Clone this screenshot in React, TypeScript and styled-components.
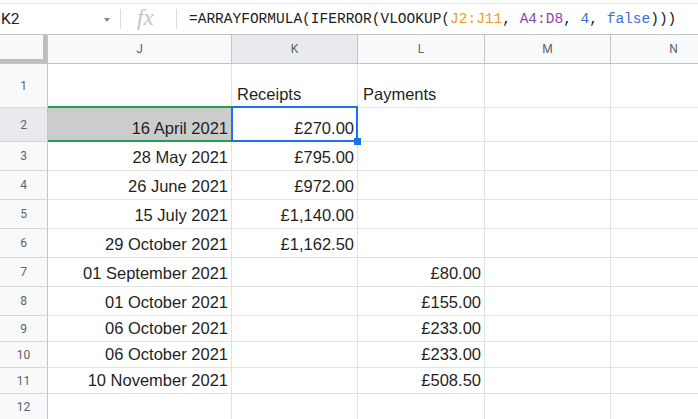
import styled, { createGlobalStyle } from "styled-components";

type Row = { n: number; h: number; j?: string; k?: string; l?: string; head?: boolean };

const columns = [
  { id: "J", w: 184 },
  { id: "K", w: 126 },
  { id: "L", w: 127 },
  { id: "M", w: 126 },
  { id: "N", w: 126 },
];

const rows: Row[] = [
  { n: 1, h: 44, k: "Receipts", l: "Payments", head: true },
  { n: 2, h: 34, j: "16 April 2021", k: "£270.00" },
  { n: 3, h: 29, j: "28 May 2021", k: "£795.00" },
  { n: 4, h: 29, j: "26 June 2021", k: "£972.00" },
  { n: 5, h: 29, j: "15 July 2021", k: "£1,140.00" },
  { n: 6, h: 29, j: "29 October 2021", k: "£1,162.50" },
  { n: 7, h: 29, j: "01 September 2021", l: "£80.00" },
  { n: 8, h: 29, j: "01 October 2021", l: "£155.00" },
  { n: 9, h: 26, j: "06 October 2021", l: "£233.00" },
  { n: 10, h: 26, j: "06 October 2021", l: "£233.00" },
  { n: 11, h: 26, j: "10 November 2021", l: "£508.50" },
  { n: 12, h: 26 },
];

function App() {
  return (
    <>
      <GlobalStyle />
      <Page>
        <FormulaBar>
          <NameBox>K2</NameBox>
          <Caret />
          <Divider />
          <Fx>fx</Fx>
          <Divider />
          <Formula>
            =ARRAYFORMULA(IFERROR(VLOOKUP(<Ref $color="#f29b1c">J2:J11</Ref>,{" "}
            <Ref $color="#8e44ad">A4:D8</Ref>, <Ref $color="#3a6fd8">4</Ref>,{" "}
            <Ref $color="#3a6fd8">false</Ref>)))
          </Formula>
        </FormulaBar>
        <Grid>
          <HeaderRow>
            <Corner>
              <Freeze />
            </Corner>
            {columns.map((c) => (
              <ColHeader key={c.id} $w={c.w} $active={c.id === "K"}>
                {c.id}
              </ColHeader>
            ))}
          </HeaderRow>
          {rows.map((r) => (
            <GridRow key={r.n} $h={r.h}>
              <RowHeader $active={r.n === 2}>{r.n}</RowHeader>
              <Cell $w={184} $fill={r.n === 2}>
                {r.n === 2 && <RangeEdge />}
                {r.j}
              </Cell>
              <Cell $w={126} $left={r.head}>
                {r.k}
                {r.n === 2 && (
                  <Selection>
                    <Handle />
                  </Selection>
                )}
              </Cell>
              <Cell $w={127} $left={r.head}>
                {r.l}
              </Cell>
              <Cell $w={126} />
              <Cell $w={126} />
            </GridRow>
          ))}
        </Grid>
      </Page>
    </>
  );
}

export default App;

const GlobalStyle = createGlobalStyle`
  html, body {
    margin: 0;
    background: #fff;
    overflow: hidden;
  }
`;

const Page = styled.div`
  width: 698px;
  height: 419px;
  overflow: hidden;
  font-family: "Liberation Sans", Arial, sans-serif;
`;

const FormulaBar = styled.div`
  height: 30px;
  margin-top: 3px;
  border-top: 1px solid #e3e3e3;
  border-bottom: 1px solid #c4c4c4;
  display: flex;
  align-items: center;
  box-sizing: content-box;
`;

const NameBox = styled.div`
  width: 100px;
  padding-left: 1px;
  font-family: Roboto, sans-serif;
  font-size: 15.5px;
  color: #202124;
`;

const Caret = styled.div`
  width: 0;
  height: 0;
  margin: 1px 10px 0 3px;
  border-left: 3.5px solid transparent;
  border-right: 3.5px solid transparent;
  border-top: 4px solid #888;
`;

const Divider = styled.div`
  width: 1px;
  height: 20px;
  background: #dadce0;
`;

const Fx = styled.div`
  width: 55px;
  padding-left: 16px;
  box-sizing: border-box;
  font-family: "Liberation Serif", serif;
  font-style: italic;
  font-size: 23px;
  color: #c4c4c4;
  margin-top: -2px;
`;

const Formula = styled.div`
  margin-left: 12px;
  font-family: "Liberation Mono", monospace;
  font-size: 14.5px;
  color: #202124;
  white-space: pre;
`;

const Ref = styled.span<{ $color: string }>`
  color: ${(p) => p.$color};
`;

const Grid = styled.div`
  display: flex;
  flex-direction: column;
`;

const HeaderRow = styled.div`
  display: flex;
  height: 29px;
`;

const Corner = styled.div`
  width: 48px;
  flex: none;
  box-sizing: border-box;
  border-right: 1px solid #c4c4c4;
  border-bottom: 1px solid #c4c4c4;
  background: #f8f9fa;
`;

const Freeze = styled.div`
  width: 47px;
  height: 28px;
  box-sizing: border-box;
  border-right: 4px solid #bfbfbf;
  border-bottom: 4px solid #bfbfbf;
`;

const ColHeader = styled.div<{ $w: number; $active?: boolean }>`
  width: ${(p) => p.$w}px;
  flex: none;
  box-sizing: border-box;
  display: flex;
  align-items: center;
  justify-content: center;
  border-right: 1px solid #c4c4c4;
  border-bottom: 1px solid #c4c4c4;
  background: ${(p) => (p.$active ? "#e8eaed" : "#f8f9fa")};
  font-family: Roboto, sans-serif;
  font-size: 12px;
  color: #5f6368;
`;

const GridRow = styled.div<{ $h: number }>`
  display: flex;
  height: ${(p) => p.$h}px;
`;

const RowHeader = styled.div<{ $active?: boolean }>`
  width: 48px;
  flex: none;
  box-sizing: border-box;
  display: flex;
  align-items: center;
  justify-content: center;
  border-right: 1px solid #c4c4c4;
  border-bottom: 1px solid #d6d6d6;
  background: ${(p) => (p.$active ? "#e8eaed" : "#f8f9fa")};
  font-family: Roboto, sans-serif;
  font-size: 12px;
  color: #5f6368;
`;

const Cell = styled.div<{ $w: number; $left?: boolean; $fill?: boolean }>`
  position: relative;
  width: ${(p) => p.$w}px;
  flex: none;
  box-sizing: border-box;
  display: flex;
  align-items: flex-end;
  justify-content: ${(p) => (p.$left ? "flex-start" : "flex-end")};
  padding: 0 3px 3px 5px;
  border-right: 1px solid #e2e2e3;
  border-bottom: 1px solid #e2e2e3;
  background: ${(p) => (p.$fill ? "#cccccc" : "#fff")};
  font-size: 16.5px;
  line-height: 20px;
  color: #1f1f1f;
  white-space: nowrap;
`;

const RangeEdge = styled.div`
  position: absolute;
  z-index: 1;
  left: 0;
  right: -1px;
  top: -2px;
  bottom: -1px;
  border-top: 2px solid #1e9e55;
  border-bottom: 2px solid #1e9e55;
  pointer-events: none;
`;

const Selection = styled.div`
  position: absolute;
  z-index: 2;
  left: -1px;
  right: -1px;
  top: -2px;
  bottom: -1px;
  border: 2px solid #1a73e8;
  pointer-events: none;
`;

const Handle = styled.div`
  position: absolute;
  right: -5px;
  bottom: -5px;
  width: 7px;
  height: 7px;
  background: #1a73e8;
`;
